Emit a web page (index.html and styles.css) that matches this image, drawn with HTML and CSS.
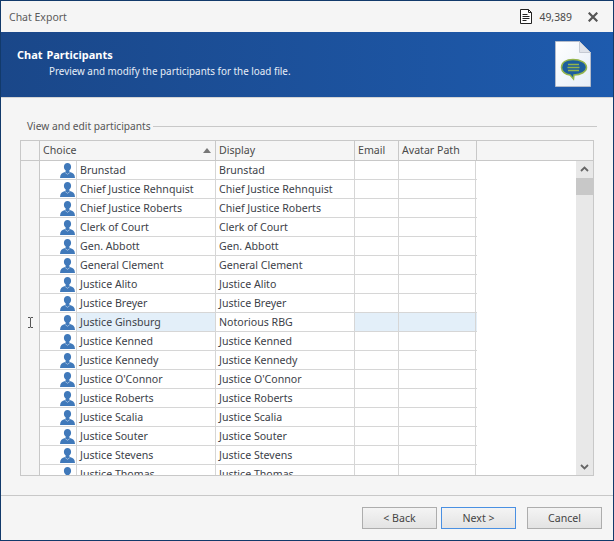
FILE: index.html
```html
<!DOCTYPE html>
<html lang="en">
<head>
<meta charset="utf-8">
<title>Chat Export</title>
<link rel="stylesheet" href="styles.css">
</head>
<body>
<svg class="defs" width="0" height="0" aria-hidden="true">
  <symbol id="person" viewBox="0 0 15 15">
    <path d="M7.500 0C5.400 0 3.900 1.600 3.900 3.800c0 1.600.7 3 1.800 3.800v1C4.600 9.500 1.300 10 .5 12.200L0 15h15l-.5-2.800C13.700 10 10.400 9.500 9.300 8.600v-1c1.100-.8 1.800-2.200 1.800-3.800C11.100 1.600 9.600 0 7.500 0z"/>
    <path d="M5.200 9.600l2.300 1.700 2.300-1.700" fill="none" stroke="#fff" stroke-width=".7" opacity=".65"/>
  </symbol>
</svg>
<div class="window">
  <header class="titlebar">
    <span class="title">Chat Export</span>
    <svg class="doc-icon" width="12" height="15" viewBox="0 0 12 15"><path d="M.5.500h8l3 3v11H.5z" fill="#fff" stroke="#222"/><path d="M8.500.500v3h3M2.500 5.500h5M2.500 7.500h7M2.500 9.500h7M2.500 11.500h4" fill="none" stroke="#222"/></svg>
    <span class="count">49,389</span>
    <svg class="close" width="10" height="10" viewBox="0 0 10 10"><path d="M.7.700l8.600 8.600M9.300.700L.7 9.300" stroke="#555" stroke-width="2.200" fill="none"/></svg>
  </header>
  <section class="banner">
    <div class="banner-text">
      <h1>Chat Participants</h1>
      <p>Preview and modify the participants for the load file.</p>
    </div>
    <svg class="file-icon" width="36" height="46" viewBox="0 0 36 46">
      <defs><linearGradient id="pg" x1="0" y1="0" x2="1" y2="1"><stop offset="0" stop-color="#fff"/><stop offset="1" stop-color="#e6eef8"/></linearGradient></defs>
      <path d="M.5.500h24l11 11v34H.5z" fill="url(#pg)" stroke="#b4bccb"/>
      <path d="M24.500.500v11h11z" fill="#dfe3ea" stroke="#c5cad3"/>
      <path d="M18 18.500c-7 0-11.500 3-11.500 8 0 4 4 7 8.500 7.500l3.500 4 .5-4c7 0 12.500-3.500 12.500-7.500 0-5-6.500-8-13.500-8z" fill="#1c5d9e" stroke="#93b44c" stroke-width="1.500"/>
      <path d="M13 23.500h11M12.500 26.500h12M13 29.500h11" stroke="#93b44c" stroke-width="1.500"/>
    </svg>
  </section>
  <main class="content">
    <div class="group-label"><span>View and edit participants</span><i></i></div>
    <div class="grid">
      <div class="grid-head">
        <div class="h-ind"></div>
        <div class="h-choice"><span>Choice</span><b class="sort"></b></div>
        <div class="h-display">Display</div>
        <div class="h-email">Email</div>
        <div class="h-avatar">Avatar Path</div>
      </div>
      <div class="grid-body">
        <div class="indicator"><svg class="ibeam" width="7" height="11" viewBox="0 0 7 11"><path d="M1 .5h2l.5.5.5-.5h2M3.500 1v9M1 10.500h2l.5-.5.5.5h2" stroke="#555" fill="none"/></svg></div>
        <div class="rows">
          <div class="row"><div class="c-icon"><svg class="person"><use href="#person"/></svg></div><div class="c-choice">Brunstad</div><div class="c-display">Brunstad</div><div class="c-email"></div><div class="c-avatar"></div></div>
          <div class="row"><div class="c-icon"><svg class="person"><use href="#person"/></svg></div><div class="c-choice">Chief Justice Rehnquist</div><div class="c-display">Chief Justice Rehnquist</div><div class="c-email"></div><div class="c-avatar"></div></div>
          <div class="row"><div class="c-icon"><svg class="person"><use href="#person"/></svg></div><div class="c-choice">Chief Justice Roberts</div><div class="c-display">Chief Justice Roberts</div><div class="c-email"></div><div class="c-avatar"></div></div>
          <div class="row"><div class="c-icon"><svg class="person"><use href="#person"/></svg></div><div class="c-choice">Clerk of Court</div><div class="c-display">Clerk of Court</div><div class="c-email"></div><div class="c-avatar"></div></div>
          <div class="row"><div class="c-icon"><svg class="person"><use href="#person"/></svg></div><div class="c-choice">Gen. Abbott</div><div class="c-display">Gen. Abbott</div><div class="c-email"></div><div class="c-avatar"></div></div>
          <div class="row"><div class="c-icon"><svg class="person"><use href="#person"/></svg></div><div class="c-choice">General Clement</div><div class="c-display">General Clement</div><div class="c-email"></div><div class="c-avatar"></div></div>
          <div class="row"><div class="c-icon"><svg class="person"><use href="#person"/></svg></div><div class="c-choice">Justice Alito</div><div class="c-display">Justice Alito</div><div class="c-email"></div><div class="c-avatar"></div></div>
          <div class="row"><div class="c-icon"><svg class="person"><use href="#person"/></svg></div><div class="c-choice">Justice Breyer</div><div class="c-display">Justice Breyer</div><div class="c-email"></div><div class="c-avatar"></div></div>
          <div class="row selected"><div class="c-icon"><svg class="person"><use href="#person"/></svg></div><div class="c-choice">Justice Ginsburg</div><div class="c-display">Notorious RBG</div><div class="c-email"></div><div class="c-avatar"></div></div>
          <div class="row"><div class="c-icon"><svg class="person"><use href="#person"/></svg></div><div class="c-choice">Justice Kenned</div><div class="c-display">Justice Kenned</div><div class="c-email"></div><div class="c-avatar"></div></div>
          <div class="row"><div class="c-icon"><svg class="person"><use href="#person"/></svg></div><div class="c-choice">Justice Kennedy</div><div class="c-display">Justice Kennedy</div><div class="c-email"></div><div class="c-avatar"></div></div>
          <div class="row"><div class="c-icon"><svg class="person"><use href="#person"/></svg></div><div class="c-choice">Justice O'Connor</div><div class="c-display">Justice O'Connor</div><div class="c-email"></div><div class="c-avatar"></div></div>
          <div class="row"><div class="c-icon"><svg class="person"><use href="#person"/></svg></div><div class="c-choice">Justice Roberts</div><div class="c-display">Justice Roberts</div><div class="c-email"></div><div class="c-avatar"></div></div>
          <div class="row"><div class="c-icon"><svg class="person"><use href="#person"/></svg></div><div class="c-choice">Justice Scalia</div><div class="c-display">Justice Scalia</div><div class="c-email"></div><div class="c-avatar"></div></div>
          <div class="row"><div class="c-icon"><svg class="person"><use href="#person"/></svg></div><div class="c-choice">Justice Souter</div><div class="c-display">Justice Souter</div><div class="c-email"></div><div class="c-avatar"></div></div>
          <div class="row"><div class="c-icon"><svg class="person"><use href="#person"/></svg></div><div class="c-choice">Justice Stevens</div><div class="c-display">Justice Stevens</div><div class="c-email"></div><div class="c-avatar"></div></div>
          <div class="row"><div class="c-icon"><svg class="person"><use href="#person"/></svg></div><div class="c-choice">Justice Thomas</div><div class="c-display">Justice Thomas</div><div class="c-email"></div><div class="c-avatar"></div></div>
        </div>
        <div class="scrollbar">
          <svg class="arrow" width="17" height="17" viewBox="0 0 17 17"><path d="M5 10l3.500-3.500L12 10" fill="none" stroke="#666" stroke-width="1.800"/></svg>
          <div class="thumb"></div>
          <div class="track"></div>
          <svg class="arrow" width="17" height="17" viewBox="0 0 17 17"><path d="M5 7l3.500 3.500L12 7" fill="none" stroke="#666" stroke-width="1.800"/></svg>
        </div>
      </div>
    </div>
  </main>
  <footer class="footer">
    <button class="btn back">&lt; Back</button>
    <button class="btn next">Next &gt;</button>
    <button class="btn cancel">Cancel</button>
  </footer>
</div>
</body>
</html>
```

FILE: styles.css
```css
* { box-sizing: border-box; }
html, body { margin: 0; padding: 0; height: 100%; overflow: hidden; }
body { font-family: "Noto Sans", "Open Sans", sans-serif; font-size: 10.6px; color: #3c4148; background: #f5f5f5; }
.defs { display: block; height: 0; }
.window { width: 614px; height: 541px; border: 1px solid #123a6b; display: flex; flex-direction: column; background: #f5f5f5; overflow: hidden; }

.titlebar { height: 31px; flex: none; display: flex; align-items: center; padding-left: 8px; color: #5b5b5b; }
.title { font-size: 10.5px; flex: 1; }
.doc-icon { margin-right: 7px; }
.count { margin-right: 16px; font-size: 10.4px; color: #4a4a4a; }
.close { margin-right: 15px; }

.banner { height: 66px; flex: none; display: flex; justify-content: space-between; background: linear-gradient(90deg, #1a4789, #1e5bae); border-bottom: 1px solid #d4d4d4; color: #fff; }
.banner-text { padding: 16px 0 0 16px; }
.banner h1 { margin: 0; font-size: 11px; font-weight: 700; line-height: 14px; word-spacing: 1px; }
.banner p { margin: 2px 0 0 32px; font-size: 9.85px; line-height: 14px; color: #e8eef7; }
.file-icon { margin: 9px 22px 0 0; }

.content { flex: 1; min-height: 0; padding: 21px 16px 19px 19px; display: flex; flex-direction: column; border-bottom: 1px solid #c8c8c8; }
.group-label { height: 14px; margin-left: 7px; display: flex; align-items: center; gap: 2px; color: #555; margin-bottom: 7px; font-size: 10.2px; }
.group-label span { white-space: nowrap; }
.group-label i { flex: 1; height: 1px; background: #c8c8c8; }

.grid { flex: 1; min-height: 0; width: 574px; border: 1px solid #c8c8c8; display: flex; flex-direction: column; background: #fff; }
.grid-head { height: 20px; flex: none; display: flex; background: #f5f5f5; border-bottom: 1px solid #c8c8c8; line-height: 19px; color: #4a4a4a; }
.grid-head > div { padding-left: 3px; border-right: 1px solid #c8c8c8; }
.grid-head > .h-ind { width: 19px; padding: 0; }
.h-choice { width: 176px; display: flex; justify-content: space-between; align-items: center; padding-right: 4px; }
.sort { width: 0; height: 0; border-left: 4px solid transparent; border-right: 4px solid transparent; border-bottom: 5px solid #777; }
.h-display { width: 139px; }
.h-email { width: 44px; }
.h-avatar { width: 78px; }

.grid-body { flex: 1; min-height: 0; display: flex; overflow: hidden; }
.indicator { width: 19px; flex: none; background: #f5f5f5; border-right: 1px solid #c8c8c8; padding: 156px 0 0 6px; }
.ibeam { display: block; }
.rows { width: 437px; flex: none; overflow: hidden; }
.row { height: 19px; display: flex; border-bottom: 1px solid #d6d6d6; line-height: 18px; color: #3c4148; }
.c-icon { width: 36px; display: flex; justify-content: flex-end; padding: 2px 1px 0 0; }
.person { width: 15px; height: 15px; fill: #4079ba; display: block; }
.c-choice, .c-display, .c-email, .c-avatar { border-left: 1px solid #d6d6d6; padding-left: 3px; white-space: nowrap; overflow: hidden; }
.c-choice { width: 139px; }
.c-display { width: 139px; }
.c-email { width: 44px; }
.c-avatar { width: 78px; border-right: 1px solid #d6d6d6; }
.row:last-child { border-bottom: 0; }
.selected { background: #e3eff9; }
.selected .c-icon, .selected .c-display { background: #fff; }

.scrollbar { width: 17px; margin-left: auto; flex: none; background: #e8e8e8; display: flex; flex-direction: column; }
.arrow { display: block; flex: none; }
.thumb { height: 17px; flex: none; background: #c8c8c8; }
.track { flex: 1; }

.footer { height: 44px; flex: none; display: flex; padding: 11px 11px 0 361px; align-items: flex-start; }
.btn { width: 75px; height: 22px; margin: 0; padding: 0; font: inherit; color: #444; border: 1px solid #adadad; background: linear-gradient(#f4f4f4, #e3e3e3); }
.next { margin-left: 4px; border-color: #4a90e2; }
.cancel { margin-left: 11px; }
```
